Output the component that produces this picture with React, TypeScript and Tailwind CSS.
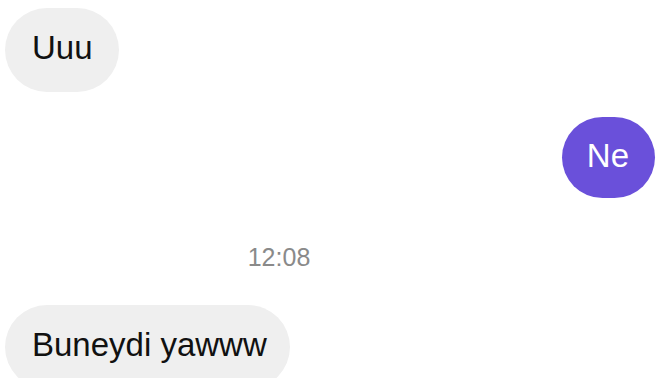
const font = { fontFamily: '"Liberation Sans", Arial, sans-serif' };

export default function App() {
  return (
    <div className="w-[672px] h-[378px] overflow-hidden bg-white" style={font}>
      <div className="flex flex-col pt-[8px]">
        <div className="flex justify-start pl-[5px]">
          <div className="rounded-full bg-[#efefef] text-[#111] text-[33px] leading-[40px] pl-[27px] pr-[26px] pt-[20px] pb-[24px]">
            Uuu
          </div>
        </div>

        <div className="flex justify-end pr-[17px] mt-[25px]">
          <div className="rounded-full bg-[#6a50da] text-white text-[33px] leading-[40px] pl-[25px] pr-[26px] pt-[19px] pb-[22px]">
            Ne
          </div>
        </div>

        <div className="flex justify-center pr-[114px] mt-[45px]">
          <span className="text-[25px] leading-[28px] text-[#8a8a8a]">12:08</span>
        </div>

        <div className="flex justify-start pl-[5px] mt-[34px]">
          <div className="rounded-[42px] bg-[#efefef] text-[#111] text-[33px] leading-[40px] pl-[27px] pr-[23px] pt-[20px] pb-[24px] whitespace-nowrap">
            Buneydi yawww
          </div>
        </div>
      </div>
    </div>
  );
}
